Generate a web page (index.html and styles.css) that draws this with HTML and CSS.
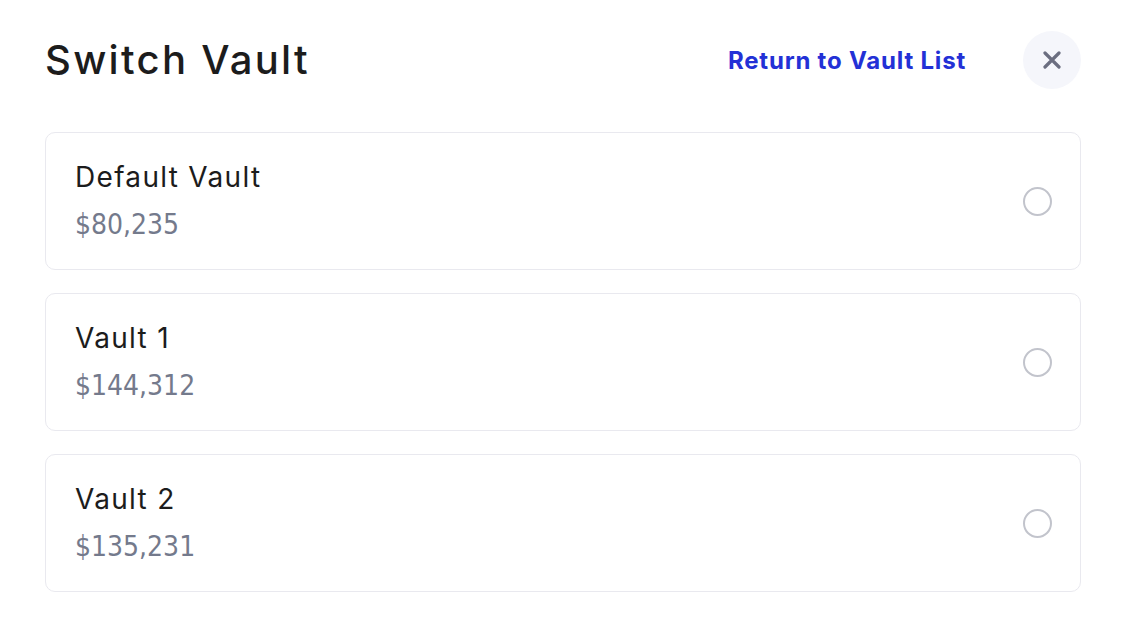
FILE: index.html
```html
<!DOCTYPE html>
<html lang="en">
<head>
<meta charset="utf-8">
<title>Switch Vault</title>
<link rel="stylesheet" href="styles.css">
</head>
<body>
<div class="modal">
  <header class="header">
    <h1 class="title">Switch Vault</h1>
    <div class="actions">
      <a class="return-link" href="#">Return to Vault List</a>
      <button class="close-btn" aria-label="Close">
        <svg width="18" height="18" viewBox="0 0 18 18" aria-hidden="true">
          <path d="M2 2 L16 16 M16 2 L2 16" stroke="#6b6e80" stroke-width="3.2" stroke-linecap="round" fill="none"/>
        </svg>
      </button>
    </div>
  </header>
  <ul class="vault-list">
    <li class="vault-card">
      <div class="vault-info">
        <div class="vault-name">Default Vault</div>
        <div class="vault-amount">$80,235</div>
      </div>
      <span class="radio"></span>
    </li>
    <li class="vault-card">
      <div class="vault-info">
        <div class="vault-name">Vault 1</div>
        <div class="vault-amount">$144,312</div>
      </div>
      <span class="radio"></span>
    </li>
    <li class="vault-card">
      <div class="vault-info">
        <div class="vault-name">Vault 2</div>
        <div class="vault-amount">$135,231</div>
      </div>
      <span class="radio"></span>
    </li>
  </ul>
</div>
</body>
</html>
```
FILE: styles.css
```css
* { box-sizing: border-box; }
html, body { margin: 0; padding: 0; background: #ffffff; }
body { font-family: "Inter", "Noto Sans", sans-serif; color: #1a1a1a; }

.modal {
  width: 1134px;
  padding: 31px 53px 0 45px;
}

.header {
  display: flex;
  align-items: center;
  justify-content: space-between;
  height: 58px;
}

.title {
  margin: 0;
  font-size: 40px;
  font-weight: 500;
  letter-spacing: 2.3px;
  color: #1c1c1c;
  line-height: 58px;
}

.actions {
  display: flex;
  align-items: center;
  gap: 57px;
}

.return-link {
  font-size: 24px;
  font-weight: 700;
  color: #2331d6;
  text-decoration: none;
  letter-spacing: 0.8px;
}

.close-btn {
  width: 58px;
  height: 58px;
  border-radius: 50%;
  border: none;
  background: #f5f6fb;
  display: flex;
  align-items: center;
  justify-content: center;
  padding: 0;
}

.vault-list {
  list-style: none;
  margin: 43px 0 0;
  padding: 0;
  display: flex;
  flex-direction: column;
  gap: 23px;
}

.vault-card {
  height: 138px;
  border: 1px solid #e9e9ef;
  border-radius: 10px;
  padding: 0 28px 0 29px;
  display: flex;
  align-items: center;
  justify-content: space-between;
}

.vault-info {
  display: flex;
  flex-direction: column;
  gap: 16px;
  margin-top: -2px;
}

.vault-name {
  font-size: 28px;
  font-weight: 400;
  color: #1c1c1c;
  line-height: 34px;
  letter-spacing: 1.3px;
}

.vault-amount {
  font-family: "Liberation Sans Narrow", "DejaVu Sans Condensed", sans-serif;
  font-size: 28px;
  color: #747a8c;
  line-height: 30px;
}

.radio {
  width: 29px;
  height: 29px;
  border-radius: 50%;
  border: 2px solid #c2c4cc;
}
```
